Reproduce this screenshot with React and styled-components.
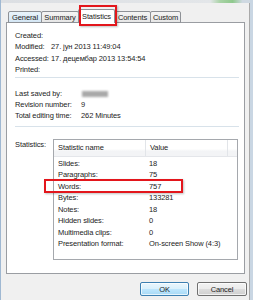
import React from 'react';
import styled, { createGlobalStyle } from 'styled-components';

const GlobalStyle = createGlobalStyle`
  html, body {
    margin: 0;
    padding: 0;
    background: #f0f0f0;
  }
  body {
    font-family: "Liberation Sans", Arial, sans-serif;
    font-size: 7.5px;
    letter-spacing: -0.1px;
    color: #1c1c1c;
  }
`;

const tabs = [
  { name: 'General', w: 34, hover: true },
  { name: 'Summary', w: 38 },
  { name: 'Statistics', w: 37, active: true },
  { name: 'Contents', w: 37 },
  { name: 'Custom', w: 31 },
];

const stats = [
  ['Slides:', '18'],
  ['Paragraphs:', '75'],
  ['Words:', '757'],
  ['Bytes:', '133281'],
  ['Notes:', '18'],
  ['Hidden slides:', '0'],
  ['Multimedia clips:', '0'],
  ['Presentation format:', 'On-screen Show (4:3)'],
];

const App = () => {
  return (
    <Frame>
      <GlobalStyle />
      <TopStrip />
      <Dialog>
        <TabRow>
          {tabs.map(t => (
            <Tab key={t.name} w={t.w} active={t.active} hover={t.hover}>
              {t.name}
            </Tab>
          ))}
        </TabRow>
        <Panel>
          <InfoGroup>
            <InfoRow labelWidth={36}><span>Created:</span><span></span></InfoRow>
            <InfoRow labelWidth={36}><span>Modified:</span><span>27. јун 2013 11:49:04</span></InfoRow>
            <InfoRow labelWidth={36}><span>Accessed:</span><span>17. децембар 2013 13:54:54</span></InfoRow>
            <InfoRow labelWidth={36}><span>Printed:</span><span></span></InfoRow>
          </InfoGroup>
          <Separator top={1} />
          <InfoGroup top={10}>
            <InfoRow labelWidth={66} rowHeight={11}>
              <span>Last saved by:</span>
              <span><Blurred /></span>
            </InfoRow>
            <InfoRow labelWidth={66} rowHeight={11}><span>Revision number:</span><span>9</span></InfoRow>
            <InfoRow labelWidth={66} rowHeight={11}><span>Total editing time:</span><span>262 Minutes</span></InfoRow>
          </InfoGroup>
          <Separator top={5} />
          <StatsSection>
            <StatsLabel>Statistics:</StatsLabel>
            <ListBox>
              <ListHeader>
                <HeaderCell w={92}>Statistic name</HeaderCell>
                <HeaderCell w={82}>Value</HeaderCell>
                <HeaderCell />
              </ListHeader>
              <ListBody>
                {stats.map(([k, v]) => (
                  <ListRow key={k}>
                    <NameCell>{k}</NameCell>
                    <ValueCell>{v}</ValueCell>
                  </ListRow>
                ))}
              </ListBody>
            </ListBox>
          </StatsSection>
        </Panel>
        <ButtonRow>
          <Button primary>OK</Button>
          <Button>Cancel</Button>
        </ButtonRow>
      </Dialog>
      <Highlight style={{ left: 78, top: 5, width: 38, height: 21 }} />
      <Highlight style={{ left: 43, top: 179, width: 139, height: 14 }} />
    </Frame>
  );
};

const Frame = styled.div`
  position: relative;
  width: 253px;
  height: 300px;
  box-sizing: border-box;
  overflow: hidden;
  background: #f0f0f0;
  border-left: 1px solid #9fb8d2;
  border-right: 3px solid #c9d6e3;
`;

const TopStrip = styled.div`
  height: 3px;
  background: linear-gradient(90deg, #dcdfe3 0%, #e3e6e9 84%, #a9d3a6 88%, #8fc98d 93%, #cfd9e2 97%);
`;

const Dialog = styled.div`
  height: 297px;
  box-sizing: border-box;
  border-right: 1px solid #a9a9a9;
  padding: 6px 2px 0 5px;
`;

const TabRow = styled.div`
  display: flex;
  align-items: flex-end;
  height: 14px;
  padding-left: 2px;
  margin-bottom: -1px;
  position: relative;
  z-index: 1;
`;

const Tab = styled.div`
  width: ${p => p.w}px;
  height: ${p => (p.active ? 14 : 12)}px;
  box-sizing: border-box;
  margin-right: -1px;
  border: 1px solid #8e9196;
  border-bottom: ${p => (p.active ? 'none' : '1px solid #8e9196')};
  border-radius: 2px 2px 0 0;
  background: ${p =>
    p.active
      ? '#ffffff'
      : p.hover
      ? 'linear-gradient(#eaf4fb, #d4e6f4)'
      : 'linear-gradient(#f4f4f4, #e6e6e6)'};
  display: flex;
  align-items: center;
  justify-content: center;
  line-height: 10px;
  padding-top: ${p => (p.active ? '0' : '1px')};
  position: relative;
  z-index: ${p => (p.active ? 2 : 1)};
`;

const Panel = styled.div`
  width: 239px;
  height: 252px;
  box-sizing: border-box;
  background: #ffffff;
  border: 1px solid #9a9da2;
  padding: 7px 5px 0 8px;
`;

const InfoGroup = styled.div`
  display: flex;
  flex-direction: column;
  margin-top: ${p => p.top || 0}px;
`;

const InfoRow = styled.div`
  display: grid;
  grid-template-columns: ${p => p.labelWidth}px 1fr;
  height: ${p => p.rowHeight || 11.4}px;
  line-height: ${p => p.rowHeight || 11.4}px;
  white-space: nowrap;
`;

const Blurred = styled.span`
  display: inline-block;
  width: 26px;
  height: 6px;
  margin-left: 1px;
  vertical-align: -1px;
  background: #a9a9a9;
  filter: blur(1px);
`;

const Separator = styled.div`
  height: 1px;
  margin-top: ${p => p.top}px;
  background: #d8e2ea;
`;

const StatsSection = styled.div`
  display: flex;
  margin-top: 12px;
`;

const StatsLabel = styled.div`
  width: 38px;
  line-height: 11px;
`;

const ListBox = styled.div`
  width: 185px;
  height: 121px;
  box-sizing: border-box;
  border: 1px solid #a5a8ad;
  display: flex;
  flex-direction: column;
`;

const ListHeader = styled.div`
  display: flex;
  height: 16px;
  background: linear-gradient(#ffffff 0%, #ffffff 55%, #f3f4f6 70%, #f3f4f6 100%);
  border-bottom: 1px solid #e4e6ea;
`;

const HeaderCell = styled.div`
  width: ${p => (p.w ? `${p.w}px` : 'auto')};
  flex: ${p => (p.w ? 'none' : '1')};
  box-sizing: border-box;
  padding-left: 4px;
  line-height: 16px;
  border-right: ${p => (p.w ? '1px solid #e2e5e9' : 'none')};
`;

const ListBody = styled.div`
  padding-top: 1px;
`;

const ListRow = styled.div`
  display: flex;
  height: 11.5px;
  line-height: 11.5px;
  white-space: nowrap;
`;

const NameCell = styled.div`
  width: 92px;
  padding-left: 4px;
  box-sizing: border-box;
`;

const ValueCell = styled.div`
  padding-left: 3px;
`;

const ButtonRow = styled.div`
  display: flex;
  justify-content: flex-end;
  gap: 8px;
  margin-top: 8px;
`;

const Button = styled.div`
  width: ${p => (p.primary ? 49 : 50)}px;
  height: 14px;
  box-sizing: border-box;
  border-radius: 2px;
  border: 1px solid ${p => (p.primary ? '#3c7fb1' : '#707070')};
  background: ${p =>
    p.primary
      ? 'linear-gradient(#eaf6fd 0%, #d9f0fc 50%, #bee6fd 51%, #a7d9f5 100%)'
      : 'linear-gradient(#f2f2f2 0%, #ebebeb 50%, #dddddd 51%, #cfcfcf 100%)'};
  box-shadow: inset 0 0 0 1px rgba(255, 255, 255, 0.7);
  display: flex;
  align-items: center;
  justify-content: center;
`;

const Highlight = styled.div`
  position: absolute;
  box-sizing: border-box;
  border: 2px solid #e3161c;
  box-shadow: 1px 1px 2px rgba(0, 0, 0, 0.25);
  z-index: 5;
  pointer-events: none;
`;

export default App;
